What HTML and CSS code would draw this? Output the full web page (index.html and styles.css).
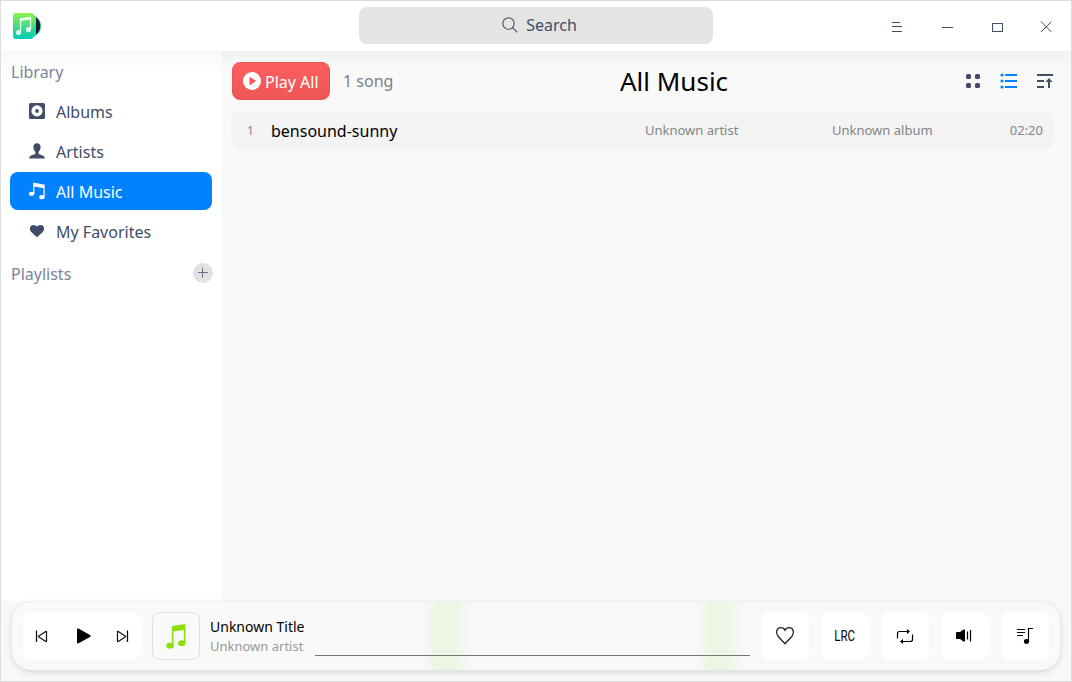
FILE: index.html
```html
<!DOCTYPE html>
<html lang="en">
<head>
<meta charset="utf-8">
<title>Music</title>
<link rel="stylesheet" href="styles.css">
</head>
<body>
<div class="window">
  <header class="titlebar">
    <svg class="logo" width="30" height="30" viewBox="0 0 30 30">
      <defs>
        <linearGradient id="lg" x1="0" y1="0" x2="0" y2="1"><stop offset="0" stop-color="#8df34a"/><stop offset=".5" stop-color="#45dc80"/><stop offset="1" stop-color="#00ccba"/></linearGradient>
      </defs>
      <path d="M20 3C27 5 29 9.500 29 14S27 23 20 25z" fill="#3bd38a"/>
      <path d="M20 3.500C26.300 5.500 28.200 10 28.200 14S26.300 22.500 20 24.500z" fill="#151b30"/>
      <path d="M4 1H19Q20.500 1 21.800 2.700L24 5.800V22.200L21.500 25.300Q20 27 18.500 27H4Q1 27 1 24V4Q1 1 4 1z" fill="url(#lg)"/>
      <path d="M8.500 20V6.800L18.500 5.500V17" fill="none" stroke="#eafff0" stroke-width="1.300"/>
      <path d="M8 6.300L19 5V7.500L8 9z" fill="#eafff0"/>
      <circle cx="6.500" cy="20.500" r="2.600" fill="#d8f9ee"/><circle cx="16.500" cy="17.500" r="2.600" fill="#d8f9ee"/>
    </svg>
    <div class="search">
      <svg width="18" height="18" viewBox="0 0 18 18" fill="none" stroke="#414d68" stroke-width="1.100"><circle cx="7.500" cy="7.500" r="5.700"/><path d="M11.600 11.600L16.300 16.300"/></svg>
      <span>Search</span>
    </div>
    <svg class="controls" width="164" height="14" viewBox="0 0 164 14" fill="none" stroke="#414d68" shape-rendering="crispEdges">
      <path d="M1 2.500H9M1 6.500H11M1 11.500H11M51 7.500H62M101.500 3.500H111.500V11.500H101.500z"/>
      <path d="M150 1.500L160.500 12M160.500 1.500L150 12" shape-rendering="auto"/>
    </svg>
  </header>
  <div class="body">
    <nav class="sidebar">
      <div class="heading">Library</div>
      <a class="item"><svg width="18" height="18" viewBox="0 0 18 18"><path fill-rule="evenodd" d="M2.500 1H15.500Q17 1 17 2.500V15.500Q17 17 15.500 17H2.500Q1 17 1 15.500V2.500Q1 1 2.500 1zM9 3.300A5.600 5.600 0 1 0 9 14.500A5.600 5.600 0 1 0 9 3.300z" fill="#414d68"/><circle cx="9" cy="9" r="1.900" fill="#414d68"/></svg><span>Albums</span></a>
      <a class="item"><svg width="18" height="18" viewBox="0 0 18 18" fill="#414d68"><path d="M9 1.200C11.500 1.200 12.800 3 12.600 5.500C12.400 8 11.300 9 10.600 10V11.700C12.200 13.200 16.700 12.800 16.900 16.500H1.100C1.300 12.800 5.800 13.200 7.400 11.700V10C6.700 9 5.600 8 5.400 5.500C5.200 3 6.500 1.200 9 1.200z"/></svg><span>Artists</span></a>
      <a class="item active"><svg width="18" height="18" viewBox="0 0 18 18" fill="#fff"><path d="M5.200 .6L16.700 2.800V14H15.500V6.200L6.400 4.500V12H5.200z"/><ellipse cx="3.600" cy="11.800" rx="2.700" ry="2.100"/><ellipse cx="14" cy="15.200" rx="2.700" ry="2.100"/></svg><span>All Music</span></a>
      <a class="item"><svg width="18" height="18" viewBox="0 0 18 18" fill="#414d68"><path d="M9 15.200L3.500 10.300C.2 6.500 2.500 2.900 5.500 2.900Q8 2.900 9 4.500Q10 2.900 12.500 2.900C15.500 2.900 17.800 6.500 14.500 10.300z"/></svg><span>My Favorites</span></a>
      <div class="heading playlists"><span>Playlists</span><svg width="20" height="20" viewBox="0 0 20 20"><circle cx="10" cy="10" r="10" fill="#e2e2e2"/><path d="M5 9.500H15M9.500 4.500V14.500" stroke="#66718a"/></svg></div>
    </nav>
    <main class="content">
      <div class="toolbar">
        <div class="play-all"><svg width="18" height="18" viewBox="0 0 18 18"><circle cx="9" cy="9" r="9" fill="#fff"/><path d="M7 5.500L12.500 9L7 12.500z" fill="#f65656" stroke="#f65656" stroke-linejoin="round"/></svg><span>Play All</span></div>
        <span class="count">1 song</span>
        <h1 class="title">All Music</h1>
        <svg class="views" width="90" height="18" viewBox="0 0 90 18">
          <g fill="#414d68"><rect x="1" y="2" width="5" height="5" rx="1.500"/><rect x="10" y="2" width="5" height="5" rx="1.500"/><rect x="1" y="11" width="5" height="5" rx="1.500"/><rect x="10" y="11" width="5" height="5" rx="1.500"/></g>
          <path d="M40 3H52M40 9H52M40 15H52" stroke="#0081ff" stroke-width="2"/>
          <g fill="#0081ff"><circle cx="37" cy="3" r="1.600"/><circle cx="37" cy="9" r="1.600"/><circle cx="37" cy="15" r="1.600"/></g>
          <path d="M72 3H88M72 9H79M72 15H79M84 16V8" stroke="#414d68" stroke-width="2"/><path d="M80.500 10L84 6L87.500 10z" fill="#414d68"/>
        </svg>
      </div>
      <div class="track">
        <span class="num">1</span><span class="name">bensound-sunny</span><span class="artist">Unknown artist</span><span class="album">Unknown album</span><span class="time">02:20</span>
      </div>
    </main>
  </div>
  <footer class="dock">
    <div class="player">
      <div class="transport">
        <svg width="118" height="48" viewBox="0 0 118 48" fill="none" stroke="#111" stroke-width="1.200">
          <path d="M13.500 18.500V30" stroke="#000"/><path d="M23.500 19.700V29.300Q23.500 29.800 22.800 29.400L15.800 25Q15 24.500 15.800 24L22.800 19.600Q23.500 19.200 23.500 19.700z"/>
          <path d="M54 17.500V30.500Q54 32 55.500 31.200L67 25Q68.500 24 67 23L55.500 16.600Q54 16 54 17.500z" fill="#000" stroke="none"/>
          <path d="M104.500 18.500V30" stroke="#000"/><path d="M94.500 19.700V29.300Q94.500 29.800 95.200 29.400L102.200 25Q103 24.500 102.200 24L95.200 19.600Q94.500 19.200 94.500 19.700z"/>
        </svg>
      </div>
      <div class="cover"><svg width="22" height="26" viewBox="0 0 22 26" fill="#8fe00a"><path d="M5.800 3.500Q5.800 2 7.300 1.700L18 .2Q19.500 0 19.500 1.500V19H17.800V6L7.500 7.500V22H5.800z"/><ellipse cx="4" cy="21.700" rx="3.800" ry="2.900"/><ellipse cx="15.800" cy="19.200" rx="3.700" ry="2.900"/></svg></div>
      <div class="info"><div class="song">Unknown Title</div><div class="singer">Unknown artist</div></div>
      <div class="progress"></div>
      <div class="actions">
        <div class="btn"><svg width="48" height="48" viewBox="0 0 48 48" fill="none" stroke="#222" stroke-width="1.300"><path d="M24 31.700L17 24.300C14 20.500 16 15.700 19.800 15.700Q22.800 15.700 24 18.200Q25.200 15.700 28.200 15.700C32 15.700 34 20.500 31 24.300z"/></svg></div>
        <div class="btn lrc"><span>LRC</span></div>
        <div class="btn"><svg width="48" height="48" viewBox="0 0 48 48" fill="none" stroke="#000" stroke-width="1.200"><path d="M16.500 26.500V21.500Q16.500 19.500 18.500 19.500H28M31.500 22.500V27.500Q31.500 29.500 29.500 29.500H20"/><path d="M26 17L29 19.500L26 22zM22 27L19 29.500L22 32z" fill="#000" stroke="none"/></svg></div>
        <div class="btn"><svg width="48" height="48" viewBox="0 0 48 48"><path d="M15 21Q15 20 16 20H19L22.500 17.500Q24 17 24 18.500V28.500Q24 30 22.500 29.500L19 27H16Q15 27 15 26z"/><path d="M26.500 19.500V27.500M29.500 18V29.500" stroke="#000" stroke-width="1.200"/></svg></div>
        <div class="btn"><svg width="48" height="48" viewBox="0 0 48 48"><path d="M16 17.500H24M16 20.500H24M16 23.500H22M27.500 30V16.500H32" fill="none" stroke="#000" stroke-width="1.200"/><ellipse cx="25.500" cy="29.500" rx="2.600" ry="2.400"/></svg></div>
      </div>
    </div>
  </footer>
</div>
</body>
</html>
```
FILE: styles.css
```css
* { box-sizing: border-box; }
body { margin: 0; font-family: "Noto Sans", sans-serif; font-size: 16px; color: #414d68; }
svg { display: block; flex: none; }
.window { width: 1072px; height: 682px; border: 1px solid #dcdcdc; background: #f9f9f9; display: flex; flex-direction: column; overflow: hidden; }
.titlebar { height: 50px; flex: none; background: #fff; display: flex; align-items: flex-start; }
.logo { margin: 11px 0 0 11px; }
.search { width: 354px; height: 37px; margin: 6px 0 0 317px; border-radius: 8px; background: #e4e4e4; display: flex; align-items: center; justify-content: center; gap: 7px; padding-left: 6px; }
.search svg { margin-top: -1px; }
.search span { margin-top: -2px; }
.controls { margin: 19px 0 0 178px; }
.body { height: 550px; flex: none; display: flex; }
.sidebar { width: 220px; flex: none; padding: 0 9px; background: linear-gradient(#f8f8f8, #fff 20px); }
.heading { height: 41px; padding-left: 1px; line-height: 42px; color: #7a8499; }
.item { display: flex; align-items: center; height: 38px; margin-bottom: 2px; padding-left: 18px; gap: 10px; border-radius: 8px; line-height: 38px; }
.item span, .playlists span { padding-top: 2px; }
.item.active { background: #0081ff; color: #fff; }
.playlists { display: flex; align-items: center; justify-content: space-between; margin-right: -1px; }
.content { flex: 1; padding: 11px 18px 0 11px; background: linear-gradient(#f1f1f1, #f9f9f9 16px); }
.toolbar { display: flex; height: 38px; align-items: center; }
.play-all { width: 98px; height: 38px; border-radius: 8px; border: 1px solid #ea5454; background: linear-gradient(#fd5e5e, #ed5656); color: #fff; display: flex; align-items: center; gap: 4px; padding-left: 10px; line-height: 38px; white-space: nowrap; }
.play-all span { padding-top: 2px; }
.count { width: 276px; padding-left: 13px; color: #7b8088; }
.title { margin: 0; padding-left: 14px; font-size: 26px; font-weight: 400; color: #000; line-height: 38px; }
.views { margin: 0 -2px 0 auto; }
.track { margin: 11px 0 0 -1px; height: 38px; border-radius: 8px; background: #f3f3f3; display: grid; grid-template-columns: 40px 374px 187px 150px 1fr; align-items: center; font-size: 13px; color: #858585; }
.num { padding-left: 16px; font-size: 12px; }
.name { font-size: 16px; color: #000; padding-top: 1px; }
.time { justify-self: end; padding-right: 10px; }
.dock { flex: 1; background: #f8f8f8; padding: 1px 11px 0; }
.player { height: 68px; border-radius: 20px; background: linear-gradient(90deg, transparent 410px, #edf5e4 424px, #edf5e4 444px, transparent 462px, transparent 682px, #edf5e4 698px, #edf5e4 713px, transparent 734px), #f9f9f9; box-shadow: 0 2px 7px rgba(0,0,0,.14); display: flex; align-items: flex-start; padding: 10px 11px; }
.transport { width: 118px; height: 48px; border-radius: 8px; background: #fff; }
.cover { width: 48px; height: 48px; margin-left: 11px; border: 1px solid #dfdfdf; border-radius: 8px; padding: 11px 0 0 13px; }
.info { width: 105px; margin-left: 10px; padding-top: 5px; white-space: nowrap; }
.song { font-size: 14px; line-height: 20px; color: #000; }
.singer { font-size: 13px; line-height: 19px; color: #9a9a9a; }
.progress { width: 435px; height: 1px; margin-top: 43px; background: #777; }
.actions { display: flex; gap: 12px; margin-left: 11px; }
.btn { width: 48px; height: 48px; border-radius: 8px; background: #fff; color: #000; }
.lrc { display: flex; justify-content: center; font: 400 14px/48px Roboto, sans-serif; }
.lrc span { transform: scaleX(.82); }
```
